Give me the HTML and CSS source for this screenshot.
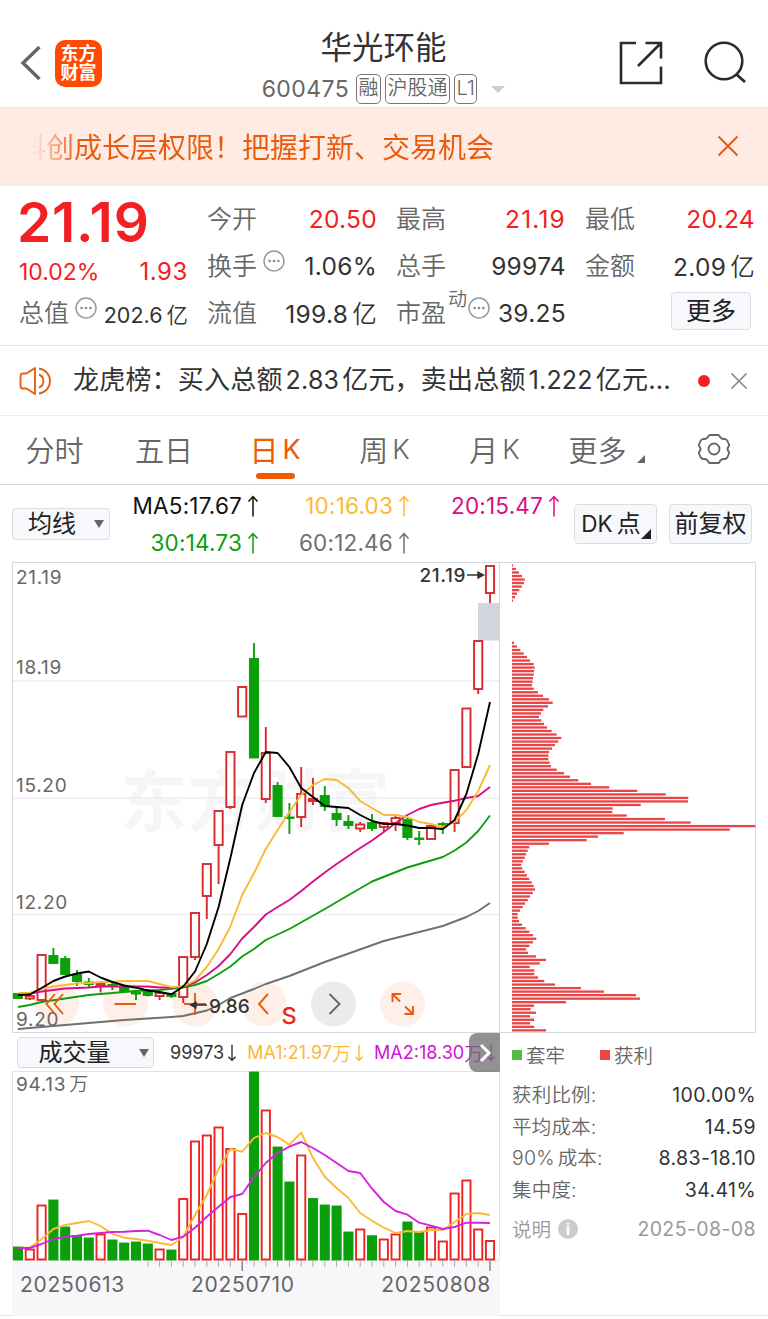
FILE: index.html
```html
<!DOCTYPE html>
<html lang="zh-CN">
<head>
  <meta charset="UTF-8">
  <meta name="viewport" content="width=device-width, initial-scale=1.0">
  <title>华光环能 600475</title>
  <link rel="stylesheet" href="styles.css">
</head>
<body>
  <svg class="defs" width="0" height="0">
    <symbol id="dots" viewBox="0 0 22 22">
      <circle cx="11" cy="11" r="10" fill="none" stroke="#999" stroke-width="1.5"/>
      <circle cx="6.600" cy="11" r="1.300" fill="#888"/><circle cx="11" cy="11" r="1.300" fill="#888"/><circle cx="15.400" cy="11" r="1.300" fill="#888"/>
    </symbol>
    <symbol id="up" viewBox="0 0 12 22">
      <path d="M6 21.5V1.5M1.5 6.5L6 1.5L10.5 6.5" fill="none" stroke="currentColor" stroke-width="1.5"/>
    </symbol>
    <symbol id="down" viewBox="0 0 12 22">
      <path d="M6 1V20M1.5 15.5L6 20L10.5 15.5" fill="none" stroke="currentColor" stroke-width="1.7"/>
    </symbol>
  </svg>

  <header class="header">
    <div class="header-left">
      <svg width="22" height="36" viewBox="0 0 22 36"><path d="M19.500 2L3 18L19.500 34" fill="none" stroke="#666" stroke-width="3.400"/></svg>
      <div class="logo">东方<br>财富</div>
    </div>
    <div class="title">
      <h1>华光环能</h1>
      <div class="code">
        <span class="num">600475</span>
        <span class="tag">融</span><span class="tag">沪股通</span><span class="tag">L1</span>
        <i class="caret"></i>
      </div>
    </div>
    <div class="header-right">
      <svg width="44" height="44" viewBox="0 0 44 44"><path d="M17 2H2V42H42V25.500M26.500 2H42V17.500M42 2L19 25" fill="none" stroke="#2b2b2b" stroke-width="2.600"/></svg>
      <svg width="44" height="44" viewBox="0 0 44 44"><circle cx="21" cy="20" r="18.300" fill="none" stroke="#2b2b2b" stroke-width="2.600"/><path d="M33 33L42 41" stroke="#2b2b2b" stroke-width="2.800"/></svg>
    </div>
  </header>

  <div class="banner">
    <p>科创成长层权限！把握打新、交易机会</p>
    <svg width="22" height="22" viewBox="0 0 22 22"><path d="M1.500 1.500L20.500 20.500M20.500 1.500L1.500 20.500" stroke="#eb5a0c" stroke-width="1.900"/></svg>
  </div>

  <section class="quote">
    <div class="price">
      <div class="last">21.19</div>
      <div class="change"><span>10.02%</span><span class="diff">1.93</span></div>
      <div class="cap"><label>总值</label><svg class="dots"><use href="#dots"/></svg><b>202.6<u>亿</u></b></div>
    </div>
    <div class="stats">
      <div class="stat"><label>今开</label><b class="red">20.50</b></div>
      <div class="stat"><label>最高</label><b class="red wide">21.19</b></div>
      <div class="stat"><label>最低</label><b class="red">20.24</b></div>
      <div class="stat"><label>换手</label><svg class="dots"><use href="#dots"/></svg><b>1.06%</b></div>
      <div class="stat"><label>总手</label><b>99974</b></div>
      <div class="stat"><label>金额</label><b>2.09<u>亿</u></b></div>
      <div class="stat"><label>流值</label><b>199.8<u>亿</u></b></div>
      <div class="stat"><label>市盈</label><sup>动</sup><svg class="dots"><use href="#dots"/></svg><b>39.25</b></div>
      <div class="stat"><button class="btn more">更多</button></div>
    </div>
  </section>

  <div class="news">
    <svg width="34" height="30" viewBox="0 0 34 30" fill="none" stroke="#e8600f" stroke-width="1.900">
      <path d="M16 2L7.500 7.500H4Q1.500 7.500 1.500 10V20Q1.500 22.500 4 22.500H7.500L16 28Z" stroke-linejoin="round"/>
      <path d="M20 8.500A7 7 0 0 1 20 21.500M20 2.500A12.600 12.600 0 0 1 20 27.500"/>
    </svg>
    <p>龙虎榜：买入总额<i>2.83</i>亿元，卖出总额<i>1.222</i>亿元…</p>
    <span class="dot"></span>
    <svg width="18" height="18" viewBox="0 0 18 18"><path d="M1.500 1.500L16.500 16.500M16.500 1.500L1.500 16.500" stroke="#888" stroke-width="1.700"/></svg>
  </div>

  <nav class="tabs">
    <a>分时</a>
    <a>五日</a>
    <a class="active">日<i>K</i></a>
    <a>周<i>K</i></a>
    <a>月<i>K</i></a>
    <a class="tab-more">更多<span class="corner"></span></a>
    <a><svg width="34" height="32" viewBox="0 0 34 32" fill="none" stroke="#666" stroke-width="1.900" stroke-linejoin="round">
      <path d="M13 2H21Q22 2 22.500 3Q24 6.500 27.500 6Q29.500 6 30.500 8L32 11.500Q32.500 12.500 31.500 13.500Q29.500 16 31.500 18.500Q32.500 19.500 32 20.500L30.500 24Q29.500 26 27.500 26Q24 25.500 22.500 29Q22 30 21 30H13Q12 30 11.500 29Q10 25.500 6.500 26Q4.500 26 3.500 24L2 20.500Q1.500 19.500 2.500 18.500Q4.500 16 2.500 13.500Q1.500 12.500 2 11.500L3.500 8Q4.500 6 6.500 6Q10 6.500 11.500 3Q12 2 13 2Z"/>
      <circle cx="17" cy="16" r="5.500"/></svg></a>
  </nav>

  <div class="ma-bar">
    <button class="btn select ma-select">均线<span class="tri"></span></button>
    <div class="ma-list">
      <span class="ma5">MA5:17.67<svg><use href="#up"/></svg></span>
      <span class="ma10">10:16.03<svg><use href="#up"/></svg></span>
      <span class="ma20">20:15.47<svg><use href="#up"/></svg></span>
      <span class="ma30">30:14.73<svg><use href="#up"/></svg></span>
      <span class="ma60">60:12.46<svg><use href="#up"/></svg></span>
    </div>
    <button class="btn dk">DK<em>点</em><span class="corner"></span></button>
    <button class="btn fq">前复权</button>
  </div>

  <main class="charts">
    <div class="left">
      <svg class="kline" viewBox="12 562 488 472">
        <text class="watermark" x="120" y="826">东方财富</text>
        <path class="grid" d="M12 681H500M12 798H500M12 914.500H500"/>
        <path class="frame" d="M12.500 562.500H500M12.500 562V1033M12 1032.500H500M499.500 562V1033"/>
        <g id="buttons">
          <circle cx="56.500" cy="1004" r="22.500"/><circle cx="125.500" cy="1004" r="22.500"/><circle cx="195" cy="1004" r="22.500"/>
          <circle cx="264" cy="1004" r="22.500"/><circle class="gray" cx="333.500" cy="1004" r="22.500"/><circle cx="402.500" cy="1004" r="22.500"/>
        </g>
        <text class="axis" x="16" y="584">21.19</text>
        <text class="axis" x="16" y="674">18.19</text>
        <text class="axis" x="16" y="791.500">15.20</text>
        <text class="axis" x="16" y="908.500">12.20</text>
        <text class="axis" x="16" y="1026">9.20</text>
        <rect x="478" y="603" width="22" height="37.500" fill="#d3d5dc"/>
        <g id="candles"></g>
        <g id="ma-lines"></g>
        <g class="button-icons">
          <path d="M55 994L46.500 1004L55 1014M63 994L54.500 1004L63 1014M114.500 1004H136M184 1004H206M195 993V1015M268 994L259 1004L268 1014"/>
          <path class="dark" d="M329.500 994L339.500 1004L329.500 1014"/>
          <path d="M392.500 1002V994H401M392.500 994L400 1001.500M413 1006V1014H404.500M413 1014L405 1006.500"/>
        </g>
        <path d="M192 1005H207M196 1002L190.500 1005L196 1008Z" fill="#333" stroke="#333" stroke-width="1.300"/>
        <text class="mark" x="209" y="1012.500">9.86</text>
        <text class="mark" x="419.500" y="582" letter-spacing="0.6">21.19</text>
        <path d="M467 575H480M478 572L483.500 575L478 578Z" fill="#333" stroke="#333" stroke-width="1.400"/>
        <text class="sell" x="281.500" y="1024">S</text>
      </svg>

      <div class="vol-bar">
        <button class="btn select vol-select">成交量<span class="tri"></span></button>
        <span class="vol-now">99973<svg><use href="#down"/></svg></span>
        <span class="vol-ma1">MA1:21.97<em>万</em><svg><use href="#down"/></svg></span>
        <span class="vol-ma2">MA2:18.30<em>万</em><svg><use href="#down"/></svg></span>
        <div class="next"><svg width="14" height="22" viewBox="0 0 14 22"><path d="M3 3L11 11L3 19" fill="none" stroke="#fff" stroke-width="3"/></svg></div>
      </div>

      <svg class="volume" viewBox="12 1071 488 189.500">
        <path class="frame thin" d="M12.500 1071.500H500M12.500 1071V1260M499.500 1071V1260M12 1260H500"/>
        <text class="axis" x="16" y="1091">94.13<tspan class="unit" dx="3">万</tspan></text>
        <g id="volumes"></g>
        <g id="vol-lines"></g>
      </svg>
      <div class="dates">
        <svg id="ticks" viewBox="12 1260 488 12"></svg>
        <div class="date-row"><span>20250613</span><span class="mid">20250710</span><span class="end">20250808</span></div>
      </div>
    </div>

    <div class="right">
      <svg class="chips" viewBox="500 562 256 472">
        <path class="frame" d="M500 562.500H755.500V1032.500H500"/>
        <g id="chip-bars"></g>
      </svg>
      <div class="legend"><i class="sq green"></i>套牢<i class="sq"></i>获利</div>
      <dl class="info">
        <dt>获利比例:</dt><dd>100.00%</dd>
        <dt>平均成本:</dt><dd>14.59</dd>
        <dt><i>90%</i>成本:</dt><dd>8.83-18.10</dd>
        <dt>集中度:</dt><dd>34.41%</dd>
      </dl>
      <div class="note"><span>说明</span><i class="help">i</i><time>2025-08-08</time></div>
    </div>
  </main>

  <script src="script.js"></script>
</body>
</html>
```
FILE: styles.css
```css
* {
  box-sizing: border-box;
}

body {
  margin: 0;
  width: 768px;
  height: 1319px;
  overflow: hidden;
  background: #fff;
  color: #333;
  font-family: Inter, "Noto Sans CJK SC", sans-serif;
  font-size: 24px;
}

i, em, b, u {
  font-style: normal;
  font-weight: inherit;
  text-decoration: none;
}

p, h1, dl, dd {
  margin: 0;
}

svg {
  display: block;
  flex: none;
}

.defs {
  position: absolute;
}

/* header */
.header {
  display: flex;
  justify-content: space-between;
  height: 108px;
  padding: 0 21px 0 20px;
  border-bottom: 1px solid #e8eaf0;
}

.header-left {
  display: flex;
  align-items: center;
  gap: 13px;
  width: 160px;
  padding-top: 19px;
}

.logo {
  width: 47px;
  height: 47px;
  padding-top: 4px;
  border-radius: 10px;
  background: #ff4a05;
  color: #fff;
  font-size: 18px;
  font-weight: 700;
  line-height: 19px;
  text-align: center;
}

.title {
  display: flex;
  flex-direction: column;
  align-items: center;
  padding-top: 29px;
}

h1 {
  font-size: 31.500px;
  font-weight: 400;
  line-height: 38px;
}

.code {
  display: flex;
  align-items: center;
  gap: 4px;
  height: 30px;
  margin-top: 7px;
  color: #666;
}

.code .num {
  margin-right: 3px;
  font-size: 23px;
  letter-spacing: 0.4px;
}

.tag {
  height: 30px;
  padding: 0 1.500px;
  border: 1.5px solid #777;
  border-radius: 5px;
  font-size: 20px;
  font-weight: 350;
  line-height: 27px;
}

.caret {
  margin-left: 10px;
  border: 7px solid transparent;
  border-top-color: #ccc;
  border-bottom: 0;
}

.header-right {
  display: flex;
  align-items: center;
  justify-content: flex-end;
  gap: 40px;
  width: 160px;
  padding-top: 19px;
}

/* banner */
.banner {
  display: flex;
  align-items: center;
  justify-content: space-between;
  height: 78px;
  padding: 0 29px 2px 18px;
  background: #feece4;
}

.banner p {
  background: linear-gradient(90deg, #feece4 14px, #eb5a0c 62px);
  background-clip: text;
  -webkit-background-clip: text;
  color: transparent;
  font-size: 28px;
}

/* quote */
.quote {
  display: flex;
  gap: 19px;
  height: 160px;
  padding: 9px 13px 0 19px;
  border-bottom: 1px solid #e6e6ea;
}

.price {
  width: 169px;
}

.last {
  height: 54px;
  margin-left: -2px;
  color: #f32023;
  font-size: 55px;
  font-weight: 600;
  letter-spacing: 0.8px;
  line-height: 54px;
}

.change {
  display: flex;
  justify-content: space-between;
  height: 42px;
  color: #f32023;
  font-size: 23px;
  line-height: 46px;
}

.diff {
  font-size: 24px;
  letter-spacing: 0.6px;
}

.cap {
  display: flex;
  align-items: center;
  height: 47px;
  padding-bottom: 4px;
}

.cap b {
  margin-left: auto;
  padding-top: 2px;
  font-size: 21.500px;
}

label {
  margin-top: -3px;
  color: #666;
  font-size: 25px;
  font-weight: 350;
}

u {
  margin-left: 4px;
  font-weight: 350;
}

.dots {
  width: 22px;
  height: 22px;
  margin: 0 0 9px 6px;
}

.stats {
  display: grid;
  grid-template-columns: repeat(3, 170px);
  grid-auto-rows: 47px;
  column-gap: 19px;
}

.stat {
  display: flex;
  align-items: center;
  white-space: nowrap;
}

.stat b {
  margin-left: auto;
  font-size: 24.500px;
  letter-spacing: 0.3px;
}

.stat .wide {
  letter-spacing: 1.2px;
}

.stat sup {
  margin: -26px 0 0 2px;
  color: #666;
  font-size: 19px;
  font-weight: 350;
  line-height: 20px;
}

.stat sup + .dots {
  margin-left: 1px;
}

.red {
  color: #f32023;
}

.btn {
  display: flex;
  align-items: center;
  justify-content: center;
  padding: 0;
  border: 1px solid #dcdde3;
  border-radius: 4px;
  background: #f7f8fb;
  color: #222;
  font-family: inherit;
  font-size: 25px;
  line-height: 1;
  white-space: nowrap;
}

.more {
  width: 80px;
  height: 38px;
  margin: -3px 4px 0 auto;
}

/* news */
.news {
  display: flex;
  align-items: center;
  height: 70px;
  padding: 0 20px 0 19px;
  border-bottom: 1px solid #ececf0;
}

.news p {
  width: 610px;
  margin-left: 20px;
  padding-bottom: 1px;
  font-size: 26px;
  font-weight: 400;
  letter-spacing: 0.2px;
  line-height: 1;
  white-space: nowrap;
}

.news i {
  margin: 0 3px;
  font-size: 25px;
}

.dot {
  width: 12px;
  height: 12px;
  margin: 0 20px 0 auto;
  border-radius: 50%;
  background: #f32023;
}

/* tabs */
.tabs {
  display: grid;
  grid-template-columns: 109px 110px 112px 107px 113px 110px 105px;
  height: 69px;
  padding-bottom: 2px;
  border-bottom: 1px solid #d6d7df;
}

.tabs a {
  position: relative;
  display: flex;
  align-items: center;
  justify-content: center;
  color: #666;
  font-size: 29px;
  font-weight: 350;
}

.tabs a i {
  margin-left: 4px;
  font-size: 27px;
}

.tabs .active {
  color: #f05a00;
  font-weight: 400;
}

.active::after {
  content: "";
  position: absolute;
  bottom: 3px;
  width: 39px;
  height: 6px;
  border-radius: 3px;
  background: #f05a00;
}

.corner {
  position: absolute;
  border: solid transparent;
  border-width: 4px;
  border-right-color: #666;
  border-bottom-color: #666;
}

.tabs .tab-more {
  padding-right: 17px;
}

.tab-more .corner {
  right: 16px;
  bottom: 19px;
}

/* moving averages */
.ma-bar {
  display: flex;
  height: 77px;
  padding-left: 12px;
}

.tri {
  border: 5px solid transparent;
  border-top: 8px solid #666;
  border-bottom: 0;
}

.ma-select {
  width: 98px;
  height: 32px;
  margin-top: 23px;
  padding-left: 10px;
  font-size: 24px;
}

.ma-select .tri {
  margin-left: 18px;
}

.ma-list {
  display: grid;
  grid-template-columns: 149px 151px 150px;
  grid-auto-rows: 37px;
  padding-top: 2px;
}

.ma-list span {
  display: flex;
  align-items: center;
  justify-content: flex-end;
  font-size: 22.500px;
  letter-spacing: 0.2px;
}

.ma-list svg {
  width: 12px;
  height: 22px;
  margin-left: 5px;
}

.ma5 { color: #111; }
.ma10 { color: #fbb936; }
.ma20 { color: #d90d86; }
.ma30 { color: #0ba00b; }
.ma60 { color: #707070; }

.dk,
.fq {
  position: relative;
  width: 83px;
  height: 40px;
  margin-top: 19px;
  font-size: 24px;
}

.dk {
  margin-left: 14px;
  padding-right: 9px;
  font-size: 22.500px;
}

.dk em {
  margin-left: 4px;
  font-size: 24px;
}

.dk .corner {
  right: 5px;
  bottom: 4px;
  border-width: 5.500px;
  border-right-color: #222;
  border-bottom-color: #222;
}

.fq {
  margin-left: 12px;
}

/* charts */
.charts {
  display: flex;
  height: 754px;
  padding-left: 12px;
  border-bottom: 1px solid #e6e6ea;
}

.left {
  width: 488px;
}

.kline {
  width: 488px;
  height: 472px;
}

.frame {
  fill: none;
  stroke: #d8d8e2;
}

.thin {
  stroke: #e2e2e6;
}

.grid {
  stroke: #eeeef4;
  stroke-width: 1.5;
}

.watermark {
  fill: #f6f6f7;
  font-size: 67.500px;
  font-weight: 700;
}

.axis {
  fill: #666;
  font-size: 19px;
  letter-spacing: 0.7px;
}

.unit {
  font-weight: 350;
}

.mark {
  fill: #333;
  font-size: 19px;
  font-weight: 500;
}

.sell {
  fill: #f32023;
  font-size: 23.500px;
  font-weight: 500;
}

#buttons circle {
  fill: #fef0e8;
}

#buttons .gray {
  fill: #ebebeb;
}

.button-icons path {
  fill: none;
  stroke: #eb5a0c;
  stroke-width: 1.900;
}

.button-icons .dark {
  stroke: #666;
}

.k-up {
  fill: #fff;
  stroke: #d8292c;
  stroke-width: 1.900;
}

.k-down {
  fill: #0ba00b;
  stroke: #0ba00b;
  stroke-width: 1.900;
}

.v-up {
  fill: #fff;
  stroke: #ee2222;
  stroke-width: 1.900;
}

.line {
  fill: none;
  stroke-width: 1.900;
  stroke-linejoin: round;
}

.vol-bar {
  position: relative;
  display: flex;
  align-items: center;
  height: 37px;
  padding-left: 5px;
  font-size: 18px;
  white-space: nowrap;
}

.vol-bar > span {
  display: flex;
  align-items: center;
}

.vol-bar span svg {
  width: 10px;
  height: 18px;
  margin-left: 3px;
}

.vol-bar em {
  font-size: 19px;
  font-weight: 350;
}

.vol-select {
  flex: none;
  width: 137px;
  height: 31px;
  padding-left: 16px;
  font-size: 24px;
}

.vol-select .tri {
  margin-left: 28px;
}

.vol-now {
  margin-left: 16px;
}

.vol-ma1 {
  margin-left: 10px;
  color: #fbb936;
}

.vol-ma2 {
  margin-left: 10px;
  color: #cf12d6;
}

.next {
  position: absolute;
  right: 0;
  top: -1px;
  display: flex;
  align-items: center;
  justify-content: center;
  width: 31px;
  height: 39px;
  border-radius: 8px 0 0 8px;
  background: rgba(110, 110, 110, 0.75);
}

.volume {
  width: 488px;
  height: 189.500px;
}

.dates {
  height: 55px;
  background: #f7f7fa;
}

#ticks {
  width: 488px;
  height: 12px;
}

#ticks path {
  stroke: #aaa;
}

#ticks .big {
  stroke: #888;
  stroke-width: 1.500;
}

.date-row {
  display: flex;
  padding: 0 9px 0 8px;
  color: #666;
  font-size: 21px;
  letter-spacing: 0.7px;
  line-height: 24px;
}

.date-row .mid {
  margin-left: 66px;
}

.date-row .end {
  margin-left: auto;
}

/* chip distribution */
.right {
  width: 256px;
}

.chips {
  width: 256px;
  height: 472px;
}

#chip-bars {
  fill: #e94446;
}

.legend {
  display: flex;
  align-items: center;
  height: 41px;
  padding-left: 12px;
  color: #666;
  font-size: 19.500px;
  font-weight: 350;
}

.sq {
  width: 10px;
  height: 10px;
  margin-right: 4px;
  background: #ec4648;
}

.sq.green {
  background: #57b947;
}

.sq:nth-of-type(2) {
  margin-left: 35px;
}

.info {
  display: grid;
  grid-template-columns: 120px 124px;
  grid-auto-rows: 31.500px;
  margin: 5px 0 0 12px;
  font-size: 19.500px;
  line-height: 31.500px;
  white-space: nowrap;
}

.info dt {
  color: #666;
  font-weight: 350;
  letter-spacing: 0.2px;
}

.info dt i {
  margin-right: 3px;
}

.info dd {
  letter-spacing: 0.4px;
  text-align: right;
}

.note {
  display: flex;
  align-items: center;
  height: 45px;
  padding-left: 12px;
  color: #999;
  font-size: 19.500px;
}

.note span {
  font-weight: 350;
}

.help {
  width: 20px;
  height: 20px;
  margin-left: 7px;
  border-radius: 50%;
  background: #ccc;
  color: #fff;
  font-size: 16px;
  font-weight: 700;
  line-height: 20px;
  text-align: center;
}

.note time {
  margin-left: auto;
  letter-spacing: 0.4px;
}
```
FILE: script.js
```js
const STEP = 11.8;
const LEFT = 18;

// [direction, body top, body bottom, wick top, wick bottom]
const candles = [
  ["d", 994, 998, 993, 999], ["u", 996, 998.5, 995, 1000], ["u", 955, 1000, 955, 1000], ["d", 956, 963, 948, 964],
  ["d", 959, 974, 956, 975], ["d", 975, 981, 970, 986], ["d", 982.5, 984, 978, 987], ["u", 984, 986, 984, 992.5],
  ["d", 985, 985.5, 982, 990], ["d", 987, 991, 985, 992], ["d", 993, 993.5, 991, 1000], ["d", 991, 995, 989, 996.5],
  ["u", 993, 996, 992, 1000], ["d", 994, 996, 993, 998], ["u", 957, 997, 957, 1003], ["u", 913, 957, 913, 960],
  ["u", 864, 896, 864, 919], ["u", 811, 845, 811, 884], ["u", 752, 807, 752, 809], ["u", 687, 716.5, 687, 717],
  ["d", 659, 757.5, 643, 758], ["u", 753, 799, 727, 803], ["d", 786, 816, 782, 817], ["d", 817.5, 818, 803, 834],
  ["u", 794, 817, 767, 827], ["u", 799, 801, 778, 805], ["d", 796, 806, 786, 811], ["d", 814, 819, 808, 826],
  ["d", 822, 825, 815, 829], ["u", 824.5, 828.5, 822, 832], ["d", 823, 828, 814, 831], ["u", 823, 827, 822, 832],
  ["u", 818, 823, 816, 831], ["d", 820, 837, 818, 840], ["d", 838.5, 839, 831, 845], ["u", 826, 839, 826, 839],
  ["d", 824, 824.5, 822, 834], ["u", 770, 823, 770, 832], ["u", 708.5, 767, 708.5, 767], ["u", 641, 689, 641, 694],
  ["u", 566, 593, 566, 603]
];

// top of each volume bar
const volumes = [
  1247, 1249, 1205, 1200, 1227, 1235.7, 1238, 1234, 1240, 1243, 1242, 1244, 1249, 1250, 1198.5, 1141, 1135, 1127, 1148.5,
  1213.5, 1072, 1110, 1147, 1182, 1155, 1198.5, 1205, 1206, 1232, 1229, 1235.7, 1239, 1234, 1222, 1232, 1227, 1241, 1193,
  1180, 1229, 1240.5
];

// days whose volume bar colour differs from the candle
const volumeDir = { 25: "d", 29: "u", 36: "u", 35: "u" };

const maLines = {
  "#707070": [[0, 1029], [5, 1024], [9, 1020], [13, 1017], [14, 1016], [16, 1010.5], [17, 1005], [18, 998], [20, 989],
    [21, 984], [23, 976], [26, 962], [31, 941], [36, 926], [38, 917], [39, 911], [40, 903]],
  "#0ba00b": [[0, 1007], [1, 1005], [2, 1002], [4, 998.5], [6, 995], [8, 993], [10, 991], [12, 990], [14, 987.5], [15, 985],
    [16, 981], [17, 974], [18, 966.5], [19, 956.5], [20, 949], [21, 940], [23, 929], [26, 909], [30, 881.5], [33, 867.5],
    [36, 857], [37, 850.5], [38, 842.5], [39, 831], [40, 815.5]],
  "#d90d86": [995, 993.5, 991.5, 990, 988.5, 988, 987.5, 986.5, 986.5, 986.5, 986.5, 986.5, 987.5, 987.5, 986.5, 982.5, 975,
    966, 954, 938.5, 927, 914.5, 907, 900, 891, 881.5, 872.5, 864, 856, 848, 840.5, 832, 823, 815, 809, 805, 802.7, 800.7,
    798, 796, 787],
  "#fbb936": [993, 993, 989, 986.5, 985, 983.5, 983, 982, 981.7, 981, 981, 981, 984, 987, 986.5, 980.5, 967, 949, 926.5, 895,
    873, 849, 830, 812, 795, 785, 779, 780, 788, 801, 808, 815, 815, 817, 822, 824, 827, 822, 810, 791, 765],
  "#000": [995, 994.5, 988, 981, 976.5, 973.5, 971.5, 977.5, 982, 985.5, 987.7, 990.5, 992, 994.3, 986.5, 971.5, 944, 907, 858,
    805, 773, 752, 753, 767, 788, 797, 806, 807, 808, 815, 821, 824, 824, 825.5, 828, 828, 829, 820, 794, 754, 702]
};

const volLines = {
  "#fbb936": [1247.7, 1247.7, 1239, 1229, 1225, 1223, 1221, 1226, 1234, 1237.7, 1239, 1240.7, 1243, 1245, 1237, 1215, 1195,
    1169, 1149, 1151.7, 1138, 1133, 1137, 1144.7, 1132.7, 1158, 1176.7, 1188, 1198, 1213, 1220.7, 1227.7, 1233, 1231, 1232,
    1230, 1230, 1222, 1214, 1213, 1215],
  "#d522df": [1248, 1248, 1244, 1239, 1237, 1235.7, 1234, 1233, 1232, 1231.7, 1231, 1230.7, 1235, 1240, 1236.7, 1227.7, 1216.7,
    1206.7, 1197, 1194, 1177, 1163, 1153, 1146.7, 1142, 1148, 1155, 1163, 1171, 1173, 1188.7, 1202, 1211, 1214.7, 1222.7,
    1225.7, 1229, 1227, 1222.7, 1222.7, 1223]
};

// width of each chip row, from high price to low
const chips = [
  1, 4, 7, 10, 12.7, 12, 9.7, 7.3, 5, 3, 1, 0, 0, 0, 0, 0, 0, 0, 0, 0, 0, 0, 2, 5, 8.3, 11.7, 15, 18, 21.7, 22.7, 22, 21.7, 21,
  20.7, 20, 21.7, 26, 31, 37, 40.7, 36, 31.3, 29, 27, 29.3, 32, 35, 39.7, 44.7, 49.3, 46.3, 43, 40, 37, 36.3, 36.3, 37.7, 39,
  44.7, 52, 58, 66.3, 79, 97.3, 125.3, 153.7, 176.3, 176, 128.7, 100.7, 100.3, 114.7, 153, 178.7, 243.3, 217.7, 111.7, 86,
  74.7, 37, 17.3, 15.7, 14, 12.7, 11, 9.3, 10.3, 12.7, 15, 17.3, 19.7, 21.7, 23, 20.7, 18, 15.7, 13, 10.7, 8, 5.7, 5.7, 7, 10,
  13.7, 17.3, 21, 24.3, 21, 17.3, 14, 16, 24, 34, 27.7, 17.7, 22.3, 22.3, 26, 32.3, 43, 69, 92, 124, 128, 54, 22, 18.7, 24,
  18, 22.3, 18, 22.3, 34
];

function add(parentId, tag, attrs) {
  const el = document.createElementNS("http://www.w3.org/2000/svg", tag);
  for (const key in attrs) el.setAttribute(key, attrs[key]);
  document.getElementById(parentId).appendChild(el);
}

function drawLines(parentId, lines) {
  for (const color in lines) {
    const points = lines[color].map((p, i) => Array.isArray(p) ? [LEFT + p[0] * STEP, p[1]] : [LEFT + i * STEP, p]);
    add(parentId, "polyline", { class: "line", stroke: color, points: points.join(" ") });
  }
}

candles.forEach(([dir, top, bottom, high, low], i) => {
  const x = LEFT + i * STEP;
  const up = dir === "u";
  add("candles", "path", { class: up ? "k-up" : "k-down", d: `M${x} ${high}V${low}` });
  add("candles", "rect", { class: up ? "k-up" : "k-down", x: x - 4.1, y: top, width: 8.2, height: bottom - top });

  const v = volumes[i];
  const volUp = (volumeDir[i] || dir) === "u";
  add("volumes", "rect", { class: volUp ? "v-up" : "k-down", x: x - 4.1, y: v + 0.5, width: 8.2, height: 1259 - v });
});

drawLines("ma-lines", maLines);
drawLines("vol-lines", volLines);

chips.forEach((w, i) => {
  if (w) add("chip-bars", "rect", { x: 512, y: 564.3 + i * 3.522, width: w, height: 2.3 });
});

for (let i = 11; i <= 40; i++) {
  const big = i === 19 || i === 40;
  add("ticks", "path", { class: big ? "big" : "", d: `M${LEFT + i * STEP} 1260V${big ? 1270 : 1266}` });
}
```
